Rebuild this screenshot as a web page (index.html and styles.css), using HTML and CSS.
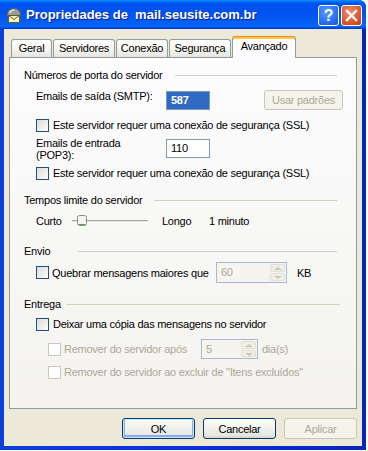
FILE: index.html
```html
<!DOCTYPE html>
<html lang="pt-BR">
<head>
  <meta charset="UTF-8">
  <title>Propriedades de mail.seusite.com.br</title>
  <link rel="stylesheet" href="styles.css">
</head>
<body>

  <div class="window">
    <div class="titlebar">
      <svg class="title-icon" width="17" height="16" viewBox="0 0 17 16">
        <path d="M2 9 C2 4 5 1.5 9 1.5 C13 1.5 15.5 4 15.5 8 L15.5 9 Z" fill="#9a9a9a" stroke="#5a5a5a"/>
        <path d="M4.5 6 C5.5 3.8 7.5 3 9.5 3.2" fill="none" stroke="#e6e6e6" stroke-width="1.4"/>
        <rect x="3.5" y="8.5" width="11" height="7" fill="#fff6c4" stroke="#6b5a18"/>
        <path d="M3.5 8.5 L9 12.5 L14.5 8.5" fill="none" stroke="#6b5a18"/>
      </svg>
      <span class="title-text">Propriedades de  mail.seusite.com.br</span>
      <div class="title-buttons">
        <span class="tb-btn tb-help">?</span>
        <span class="tb-btn tb-close">
          <svg width="13" height="13" viewBox="0 0 13 13">
            <path d="M2 2 L11 11 M11 2 L2 11" stroke="#fff" stroke-width="2.4" stroke-linecap="square"/>
          </svg>
        </span>
      </div>
    </div>

    <div class="client">
      <div class="tabs">
        <div class="tab tab-geral">Geral</div>
        <div class="tab tab-servidores">Servidores</div>
        <div class="tab tab-conexao">Conexão</div>
        <div class="tab tab-seguranca">Segurança</div>
        <div class="tab tab-active">Avançado</div>
      </div>

      <div class="panel">
        <div class="group-head">
          <span class="group-label w-portas">Números de porta do servidor</span>
          <span class="rule"></span>
        </div>

        <div class="row row-smtp">
          <span class="field-label">Emails de saída (SMTP):</span>
          <span class="field field-sel">587</span>
          <button class="btn btn-small" disabled>Usar padrões</button>
        </div>

        <div class="row row-check row-ssl1">
          <span class="check"></span>
          <span>Este servidor requer uma conexão de segurança (SSL)</span>
        </div>

        <div class="row row-pop">
          <span class="field-label">Emails de entrada<br>(POP3):</span>
          <span class="field">110</span>
        </div>

        <div class="row row-check row-ssl2">
          <span class="check"></span>
          <span>Este servidor requer uma conexão de segurança (SSL)</span>
        </div>

        <div class="group-head head-tempos">
          <span class="group-label w-tempos">Tempos limite do servidor</span>
          <span class="rule"></span>
        </div>

        <div class="row row-slider">
          <span class="slider-min">Curto</span>
          <span class="slider">
            <span class="slider-track"></span>
            <svg class="slider-thumb" width="10" height="11" viewBox="0 0 10 11">
              <rect x="0.5" y="0.5" width="9" height="10" rx="2" fill="#f4f3ee" stroke="#8d8c86"/>
              <path d="M2 9.5 H8" stroke="#43b43b"/>
            </svg>
          </span>
          <span class="slider-max">Longo</span>
          <span>1 minuto</span>
        </div>

        <div class="group-head head-envio">
          <span class="group-label w-envio">Envio</span>
          <span class="rule"></span>
        </div>

        <div class="row row-quebrar">
          <span class="check"></span>
          <span class="quebrar-label">Quebrar mensagens maiores que</span>
          <span class="spin spin-kb">
            <span class="spin-value">60</span>
            <span class="spin-btns"><span class="spin-up"></span><span class="spin-down"></span></span>
          </span>
          <span class="unit-kb">KB</span>
        </div>

        <div class="group-head head-entrega">
          <span class="group-label w-entrega">Entrega</span>
          <span class="rule"></span>
        </div>

        <div class="row row-check row-deixar">
          <span class="check"></span>
          <span>Deixar uma cópia das mensagens no servidor</span>
        </div>

        <div class="row row-sub row-apos">
          <span class="check check-off"></span>
          <span class="muted apos-label">Remover do servidor após</span>
          <span class="spin spin-dias">
            <span class="spin-value">5</span>
            <span class="spin-btns"><span class="spin-up"></span><span class="spin-down"></span></span>
          </span>
          <span class="muted unit-dias">dia(s)</span>
        </div>

        <div class="row row-sub row-excluir">
          <span class="check check-off"></span>
          <span class="muted">Remover do servidor ao excluir de "Itens excluídos"</span>
        </div>
      </div>

      <div class="actions">
        <button class="btn btn-default">OK</button>
        <button class="btn">Cancelar</button>
        <button class="btn" disabled>Aplicar</button>
      </div>
    </div>
  </div>

</body>
</html>
```

FILE: styles.css
```css
body {
  margin: 0;
  background: #fff;
  font-family: Tahoma, "Liberation Sans", Arial, sans-serif;
  font-size: 11px;
  letter-spacing: -0.25px;
  color: #000;
}

.window {
  width: 366px;
  height: 450px;
  box-sizing: border-box;
  display: flex;
  flex-direction: column;
  background: linear-gradient(90deg, #0a3fd8, #0831d9 50%, #0626b8);
  border-top-right-radius: 7px;
  overflow: hidden;
}

/* title bar */
.titlebar {
  height: 29px;
  flex: none;
  display: flex;
  align-items: center;
  padding: 0 4px 0 5px;
  background: linear-gradient(#0997ff, #0053ee 10%, #0050ee 40%, #0562f4 85%, #0a66f8 92%, #003dd7 97%, #003dd7);
  color: #fff;
}
.title-icon {
  flex: none;
  margin-right: 4px;
}
.title-text {
  flex: 1;
  white-space: pre;
  font: bold 13px "Liberation Sans", Arial, sans-serif;
  letter-spacing: 0;
  text-shadow: 1px 1px #0c1f8a;
}
.title-buttons {
  display: flex;
  gap: 2px;
  margin-top: 2px;
}
.tb-btn {
  width: 21px;
  height: 21px;
  box-sizing: border-box;
  border: 1px solid #fff;
  border-radius: 3px;
  display: flex;
  align-items: center;
  justify-content: center;
}
.tb-help {
  background: radial-gradient(circle at 40% 30%, #5a9bff, #2d6ff0 60%, #1a52d0);
  font: bold 16px "Liberation Sans", Arial, sans-serif;
  color: #fff;
}
.tb-close {
  background: radial-gradient(circle at 40% 30%, #f08c6a, #e05a34 55%, #c23b16);
}

/* client area */
.client {
  flex: 1;
  margin: 0 4px 4px;
  padding: 7px 5px 0;
  background: #ece9d8;
}

.tabs {
  display: flex;
  align-items: flex-end;
  height: 22px;
  padding-left: 2px;
  margin-bottom: -1px;
  position: relative;
  z-index: 1;
}
.tab {
  height: 18px;
  box-sizing: border-box;
  margin: 0 1px 1px 0;
  border: 1px solid #919b9c;
  border-bottom: none;
  border-radius: 3px 3px 0 0;
  background: linear-gradient(#fff, #f3f3ef 60%, #e6e5de);
  text-align: center;
  line-height: 17px;
}
.tab-geral { width: 41px; }
.tab-servidores { width: 62px; }
.tab-conexao { width: 52px; }
.tab-seguranca { width: 62px; }
.tab-active {
  width: 64px;
  height: 22px;
  margin-bottom: 0;
  border-top: 1px solid #e68b2c;
  box-shadow: inset 0 2px 0 #ffc73c;
  background: #fcfcfe;
  line-height: 19px;
}

.panel {
  height: 352px;
  box-sizing: border-box;
  padding: 10px 19px 0 14px;
  border: 1px solid #919b9c;
  background: linear-gradient(#fcfcfe, #f4f3ee);
}

.group-head {
  display: flex;
  align-items: center;
  height: 14px;
}
.group-label {
  flex: none;
}
.w-portas { width: 151px; }
.w-tempos { width: 130px; }
.w-envio { width: 54px; }
.w-entrega { width: 43px; }
.rule {
  flex: 1;
  height: 1px;
  background: #d0d0bf;
}
.head-tempos { margin-top: 13px; }
.head-envio { margin-top: 16px; }
.head-entrega { margin-top: 14px; margin-right: -3px; }

.row {
  display: flex;
  align-items: center;
  padding-left: 12px;
}
.row-check {
  height: 14px;
  gap: 4px;
}
.row-sub {
  padding-left: 24px;
  gap: 3px;
}
.muted { color: #aca899; }

.field-label {
  width: 130px;
  flex: none;
  line-height: 12px;
}
.field {
  width: 44px;
  height: 19px;
  flex: none;
  box-sizing: border-box;
  padding-left: 4px;
  border: 1px solid #7f9db9;
  background: #fff;
  line-height: 17px;
}
.field-sel {
  background: #316ac5;
  color: #fff;
  font-weight: bold;
}

.row-smtp {
  margin-top: 8px;
  height: 20px;
  align-items: flex-start;
}
.row-smtp .field { margin-top: 1px; }
.row-ssl1 { margin-top: 8px; }
.row-pop {
  margin-top: 5px;
  height: 26px;
  align-items: flex-start;
}
.row-pop .field { margin-top: 2px; }
.row-ssl2 { margin-top: 3px; }

.check {
  width: 13px;
  height: 13px;
  flex: none;
  box-sizing: border-box;
  border: 1px solid #1c5180;
  background: linear-gradient(135deg, #dcdcd7, #fbfbf9);
}
.check-off {
  border-color: #cac8bb;
  background: #fff;
}

/* buttons */
.btn {
  width: 73px;
  height: 21px;
  flex: none;
  padding: 0;
  border: 1px solid #003c74;
  border-radius: 3px;
  background: linear-gradient(#fff, #f3f3ef 40%, #e8e7e0 85%, #d8d3c8);
  font: 11px Tahoma, "Liberation Sans", Arial, sans-serif;
  letter-spacing: -0.25px;
  color: #000;
}
.btn:disabled {
  border-color: #c9c7ba;
  background: #f5f4ea;
  color: #aca899;
}
.btn-default {
  box-shadow: inset 0 0 0 1px #cee7ff, inset 0 -1px 0 2px #89adec;
}
.btn-small {
  width: 79px;
  height: 20px;
  margin-left: 54px;
}

/* slider */
.row-slider {
  margin-top: 7px;
  height: 14px;
}
.slider-min { width: 36px; flex: none; }
.slider {
  width: 76px;
  height: 14px;
  flex: none;
  position: relative;
  display: flex;
  align-items: center;
}
.slider-track {
  width: 100%;
  height: 3px;
  box-sizing: border-box;
  border-top: 1px solid #a7a69e;
  border-bottom: 1px solid #fff;
  background: #e6e4da;
}
.slider-thumb {
  position: absolute;
  left: 5px;
  top: 1px;
}
.slider-max {
  width: 47px;
  flex: none;
  margin-left: 14px;
}

/* spinners */
.spin {
  display: flex;
  height: 21px;
  box-sizing: border-box;
  border: 1px solid #a5b9d0;
  background: #f5f4ee;
  flex: none;
}
.spin-value {
  flex: 1;
  padding-left: 4px;
  color: #aca899;
  line-height: 19px;
}
.spin-btns {
  width: 15px;
  margin: 1px;
  display: flex;
  flex-direction: column;
  gap: 1px;
}
.spin-up, .spin-down {
  flex: 1;
  border-radius: 2px;
  background: #f0efe6;
  border: 1px solid #e2dfd2;
  position: relative;
}
.spin-up::after, .spin-down::after {
  content: "";
  position: absolute;
  left: 3px;
  border-left: 4px solid transparent;
  border-right: 4px solid transparent;
}
.spin-up::after {
  top: 2px;
  border-bottom: 3px solid #c9c7ba;
}
.spin-down::after {
  top: 2px;
  border-top: 3px solid #c9c7ba;
}

.row-quebrar {
  margin-top: 4px;
  height: 21px;
}
.quebrar-label {
  width: 164px;
  flex: none;
  margin-left: 3px;
}
.spin-kb { width: 71px; }
.unit-kb { margin-left: 10px; }

.row-deixar { margin-top: 6px; }
.row-apos {
  margin-top: 8px;
  height: 20px;
}
.apos-label { width: 134px; flex: none; }
.spin-dias { width: 57px; height: 20px; }
.unit-dias { margin-left: 1px; }
.row-excluir {
  margin-top: 6px;
  height: 14px;
}

.actions {
  display: flex;
  justify-content: flex-end;
  gap: 8px;
  margin-top: 9px;
}
```
